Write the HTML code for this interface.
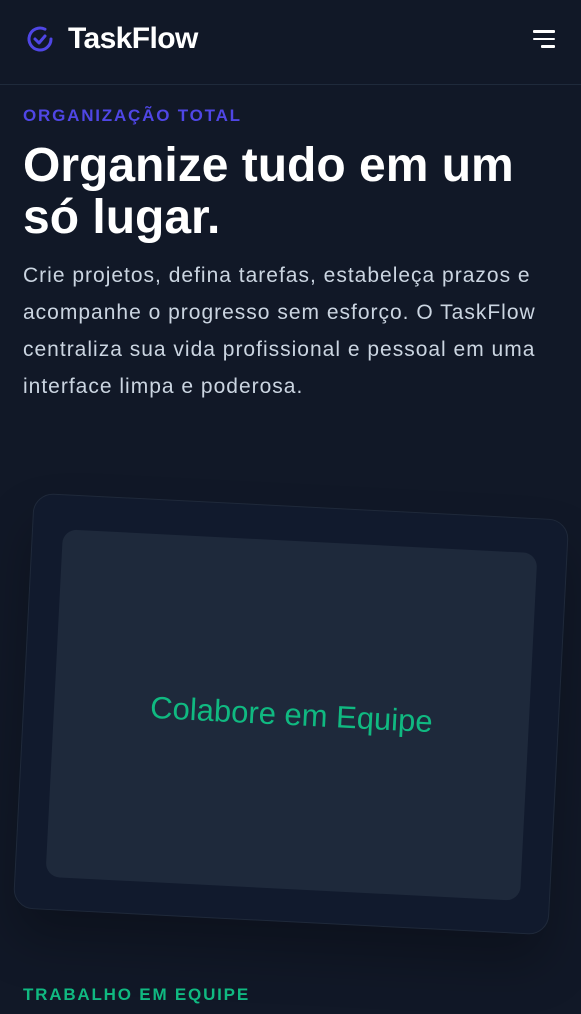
<!DOCTYPE html>
<html><head><meta charset="utf-8"><style>
*{margin:0;padding:0;box-sizing:border-box}
body{width:581px;height:1014px;overflow:hidden;background:#111827;font-family:"Liberation Sans",sans-serif;position:relative}
.hdr{height:85px;border-bottom:1px solid #1f2a3b;position:relative}
.logo{position:absolute;left:24px;top:22px;display:flex;align-items:center}
.logo span{color:#fff;font-weight:bold;font-size:30px;letter-spacing:-0.6px;margin-left:12px}
.menu{position:absolute;right:26px;top:30px;width:22px}
.menu i{display:block;height:2.5px;background:#fff;margin-bottom:5px;border-radius:1px}
.eyebrow{position:absolute;left:23px;top:106px;color:#4f46e5;font-weight:bold;font-size:17px;letter-spacing:1.8px}
h1{position:absolute;left:23px;top:140px;color:#fff;font-size:48px;line-height:52px;font-weight:bold;letter-spacing:0;width:520px}
p{position:absolute;left:23px;top:257px;color:#cbd5e1;font-size:21px;line-height:37px;width:560px;letter-spacing:1px}
.outer{position:absolute;left:23px;top:506px;width:536px;height:416px;background:#111a2d;border:1px solid #1f293a;border-radius:20px;transform:rotate(2.9deg);box-shadow:0 30px 50px rgba(0,0,0,.25)}
.inner{position:absolute;left:30px;top:34px;width:475px;height:348px;background:#1e293b;border-radius:14px;display:flex;align-items:center;justify-content:center;color:#10b981;font-size:31px}
.eb2{position:absolute;left:23px;top:985px;color:#10b981;font-weight:bold;font-size:17px;letter-spacing:1.8px}
</style></head><body>
<div class="hdr">
<div class="logo"><svg width="32" height="32" viewBox="0 0 32 32" fill="none" stroke="#4f46e5" stroke-width="3" stroke-linecap="round" stroke-linejoin="round"><path d="M27 16a11 11 0 1 1-6-9.8"/><path d="M11 16l4 4 6-7"/></svg><span>TaskFlow</span></div>
<div class="menu"><i></i><i></i><i style="width:14px;margin-left:8px"></i></div>
</div>
<div class="eyebrow">ORGANIZAÇÃO TOTAL</div>
<h1>Organize tudo em um só lugar.</h1>
<p>Crie projetos, defina tarefas, estabeleça prazos e acompanhe o progresso sem esforço. O TaskFlow centraliza sua vida profissional e pessoal em uma interface limpa e poderosa.</p>
<div class="outer"><div class="inner">Colabore em Equipe</div></div>
<div class="eb2">TRABALHO EM EQUIPE</div>
</body></html>
